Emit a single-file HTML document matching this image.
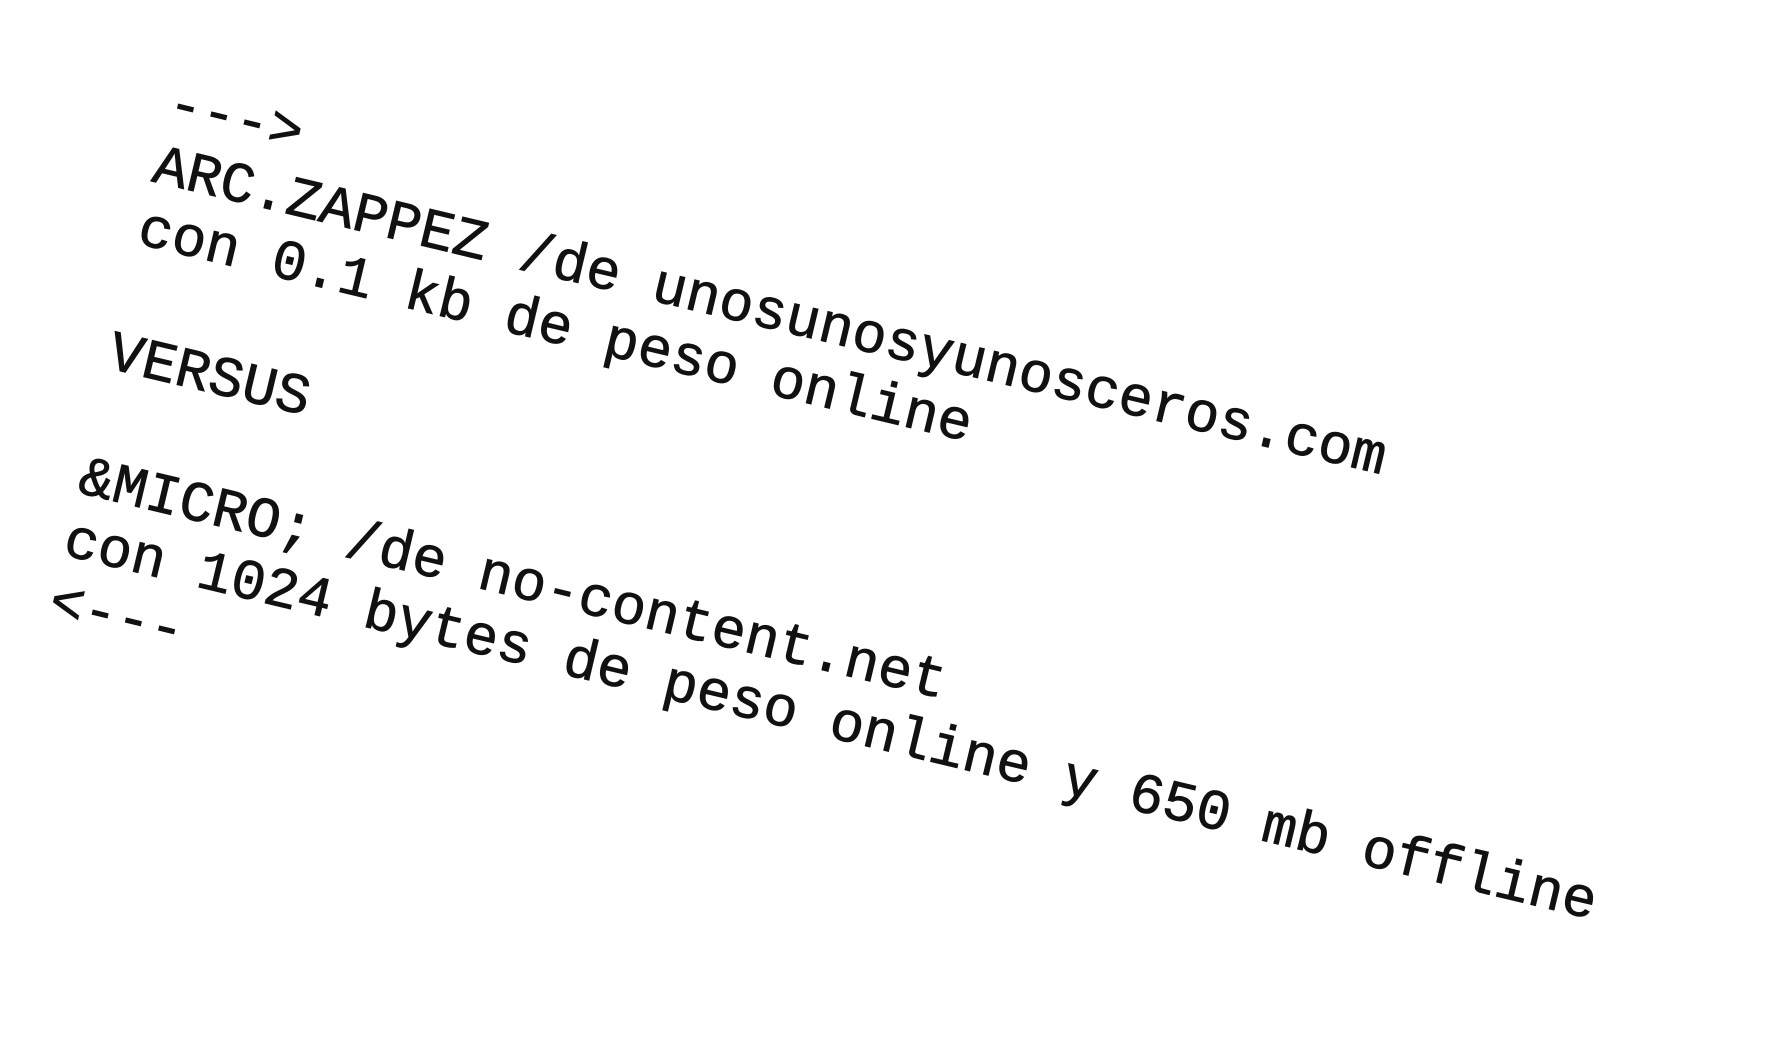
<!DOCTYPE html>
<html>
<head>
<meta charset="utf-8">
<style>
html,body{margin:0;padding:0;background:#fff;width:1773px;height:1048px;overflow:hidden;}
pre{
  position:absolute;left:176px;top:74px;margin:0;
  font-family:"Liberation Mono","Courier New",monospace;
  font-size:57px;line-height:64px;font-weight:normal;color:#111;
  -webkit-text-stroke:0.8px #111;
  transform-origin:0 0;transform:rotate(13.4deg);
}
</style>
</head>
<body>
<pre>---&gt;
ARC.ZAPPEZ /de unosunosyunosceros.com
con 0.1 kb de peso online

VERSUS

&amp;MICRO; /de no-content.net
con 1024 bytes de peso online y 650 mb offline
&lt;---</pre>
</body>
</html>
